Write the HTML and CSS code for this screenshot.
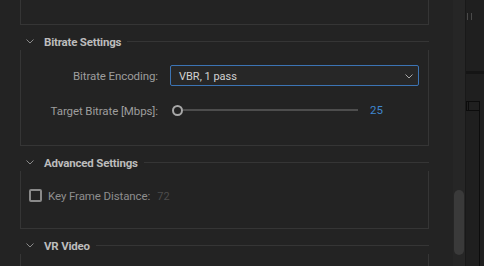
FILE: index.html
```html
<!DOCTYPE html>
<html lang="en">
<head>
  <meta charset="UTF-8" />
  <title>Export Settings</title>
  <link rel="stylesheet" href="styles.css">
</head>
<body>

  <div class="app">
    <div class="main">
      <div class="panel-tail"></div>

      <section class="group">
        <div class="group-head">
          <svg class="chev" width="8" height="5" viewBox="0 0 8 5"><polyline points="0.5,0.5 4,4 7.5,0.5" fill="none" stroke="#8a8a8a" stroke-width="1"/></svg>
          <span class="group-title">Bitrate Settings</span>
          <span class="group-rule"></span>
        </div>
        <div class="group-body bitrate">
          <div class="field-label">Bitrate Encoding:</div>
          <div class="select">
            <span>VBR, 1 pass</span>
            <svg width="8" height="5" viewBox="0 0 8 5"><polyline points="0.5,0.5 4,4 7.5,0.5" fill="none" stroke="#a8a8a8" stroke-width="1"/></svg>
          </div>
          <div class="field-label">Target Bitrate [Mbps]:</div>
          <div class="slider">
            <span class="thumb"></span>
            <span class="track"></span>
            <span class="slider-value">25</span>
          </div>
        </div>
      </section>

      <section class="group">
        <div class="group-head">
          <svg class="chev" width="8" height="5" viewBox="0 0 8 5"><polyline points="0.5,0.5 4,4 7.5,0.5" fill="none" stroke="#8a8a8a" stroke-width="1"/></svg>
          <span class="group-title">Advanced Settings</span>
          <span class="group-rule"></span>
        </div>
        <div class="group-body advanced">
          <span class="checkbox"></span>
          <span class="check-label">Key Frame Distance:</span>
          <span class="dim-value">72</span>
        </div>
      </section>

      <section class="group">
        <div class="group-head">
          <svg class="chev" width="8" height="5" viewBox="0 0 8 5"><polyline points="0.5,0.5 4,4 7.5,0.5" fill="none" stroke="#8a8a8a" stroke-width="1"/></svg>
          <span class="group-title">VR Video</span>
          <span class="group-rule"></span>
        </div>
        <div class="group-body vr"></div>
      </section>
    </div>

    <div class="scrollbar">
      <div class="scroll-thumb"></div>
    </div>

    <div class="side">
      <svg width="18" height="266" viewBox="0 0 18 266">
        <rect x="0" y="71" width="18" height="3" fill="#151515"/>
        <line x1="1.5" y1="13" x2="1.5" y2="20" stroke="#4a4a4a"/>
        <line x1="5.5" y1="13" x2="5.5" y2="20" stroke="#4a4a4a"/>
        <rect x="0.5" y="101.5" width="13" height="9" fill="none" stroke="#0c0c0c"/>
        <line x1="2.5" y1="102" x2="2.5" y2="110" stroke="#0c0c0c"/>
        <line x1="13.5" y1="110" x2="13.5" y2="266" stroke="#0c0c0c"/>
      </svg>
    </div>
  </div>

</body>
</html>
```

FILE: styles.css
```css
* {
  box-sizing: border-box;
}

body {
  margin: 0;
  background-color: #232323;
  font-family: Roboto, 'Liberation Sans', sans-serif;
  font-size: 11px;
  overflow: hidden;
}

.app {
  display: flex;
  height: 266px;
}

.main {
  width: 453px;
  padding-left: 20px;
  background-color: #232323;
}

.panel-tail {
  width: 409px;
  height: 25px;
  border: 1px solid #353535;
  border-top: none;
}

.group {
  width: 409px;
  margin-top: 7px;
}

.group-head {
  display: flex;
  align-items: center;
  height: 18px;
}

.chev {
  margin-left: 6px;
  margin-top: 1px;
}

.group-title {
  margin-left: 10px;
  padding-top: 2px;
  color: #bcbcbc;
  font-size: 11.5px;
  font-weight: bold;
  letter-spacing: -0.2px;
  line-height: 18px;
}

.group-rule {
  flex: 1;
  align-self: flex-start;
  height: 1px;
  margin-top: 9px;
  margin-left: 6px;
  background-color: #353535;
}

.group-body {
  border: 1px solid #353535;
  border-top: none;
}

.bitrate {
  height: 96px;
  padding: 15px 9px 0 0;
  display: grid;
  grid-template-columns: 137px 1fr;
  grid-template-rows: 21px 20px;
  column-gap: 12px;
  row-gap: 14px;
  align-items: center;
}

.field-label {
  padding-top: 1px;
  text-align: right;
  color: #9d9d9d;
  font-size: 11.5px;
  letter-spacing: -0.1px;
}

.select {
  display: flex;
  align-items: center;
  justify-content: space-between;
  height: 21px;
  padding: 1px 5px 0 8px;
  border: 1px solid #3c74b4;
  border-radius: 2px;
  background-color: #272727;
  color: #d2d2d2;
}

.slider {
  display: flex;
  align-items: center;
  height: 20px;
}

.thumb {
  width: 11px;
  height: 11px;
  margin-left: 2px;
  border: 2px solid #a8a8a8;
  border-radius: 50%;
  background-color: #232323;
}

.track {
  width: 175px;
  height: 2px;
  background-color: #4d4d4d;
}

.slider-value {
  margin-left: 12px;
  color: #3f86cf;
  font-size: 11.5px;
}

.advanced {
  height: 58px;
  padding: 18px 0 0 8px;
  display: flex;
  align-items: flex-start;
}

.checkbox {
  width: 13px;
  height: 13px;
  border: 2px solid #8a8a8a;
  border-radius: 2px;
}

.check-label {
  margin-left: 6px;
  padding-top: 1px;
  line-height: 13px;
  color: #8e8e8e;
  font-size: 11.5px;
  letter-spacing: -0.1px;
}

.dim-value {
  margin-left: 7px;
  padding-top: 1px;
  line-height: 13px;
  color: #4c4c4c;
}

.vr {
  height: 20px;
}

.scrollbar {
  width: 12px;
  padding-top: 190px;
  background-color: #262626;
}

.scroll-thumb {
  width: 10px;
  height: 65px;
  margin-left: 1px;
  border-radius: 5px;
  background-color: #3a3a3a;
}

.side {
  flex: 1;
  border-left: 1px solid #191919;
  background-color: #1f1f1f;
}

.side svg {
  display: block;
}
```
